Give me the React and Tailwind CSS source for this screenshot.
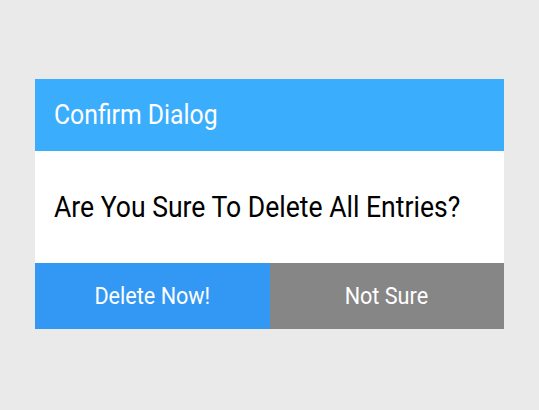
import React from 'react'

const font = { fontFamily: 'Roboto, "Liberation Sans", sans-serif' }

const ConfirmDialog = ({ title, message, onConfirm, onCancel }) => {
  return (
    <div className="w-[469px] bg-white" style={font}>
      {/* Header */}
      <div className="h-[72px] bg-[#3badfd] flex items-center px-[19px]">
        <span className="inline-block origin-left scale-x-[0.9] text-[27.5px] leading-none text-white whitespace-nowrap">
          {title}
        </span>
      </div>

      {/* Body */}
      <div className="h-[112px] flex items-center px-[19px]">
        <span className="inline-block origin-left scale-x-[0.885] text-[30px] leading-none text-black whitespace-nowrap">
          {message}
        </span>
      </div>

      {/* Actions */}
      <div className="grid grid-cols-2 h-[66px]">
        <button
          onClick={onConfirm}
          className="bg-[#3298f4] text-white flex items-center justify-center"
        >
          <span className="inline-block scale-x-[0.9] text-[24px] leading-none whitespace-nowrap">
            Delete Now!
          </span>
        </button>
        <button
          onClick={onCancel}
          className="bg-[#868686] text-white flex items-center justify-center"
        >
          <span className="inline-block scale-x-[0.9] text-[24px] leading-none whitespace-nowrap">
            Not Sure
          </span>
        </button>
      </div>
    </div>
  )
}

export default function App() {
  return (
    <div className="min-h-screen bg-[#eaeaea] pt-[79px] pl-[35px]">
      <ConfirmDialog
        title="Confirm Dialog"
        message="Are You Sure To Delete All Entries?"
      />
    </div>
  )
}
